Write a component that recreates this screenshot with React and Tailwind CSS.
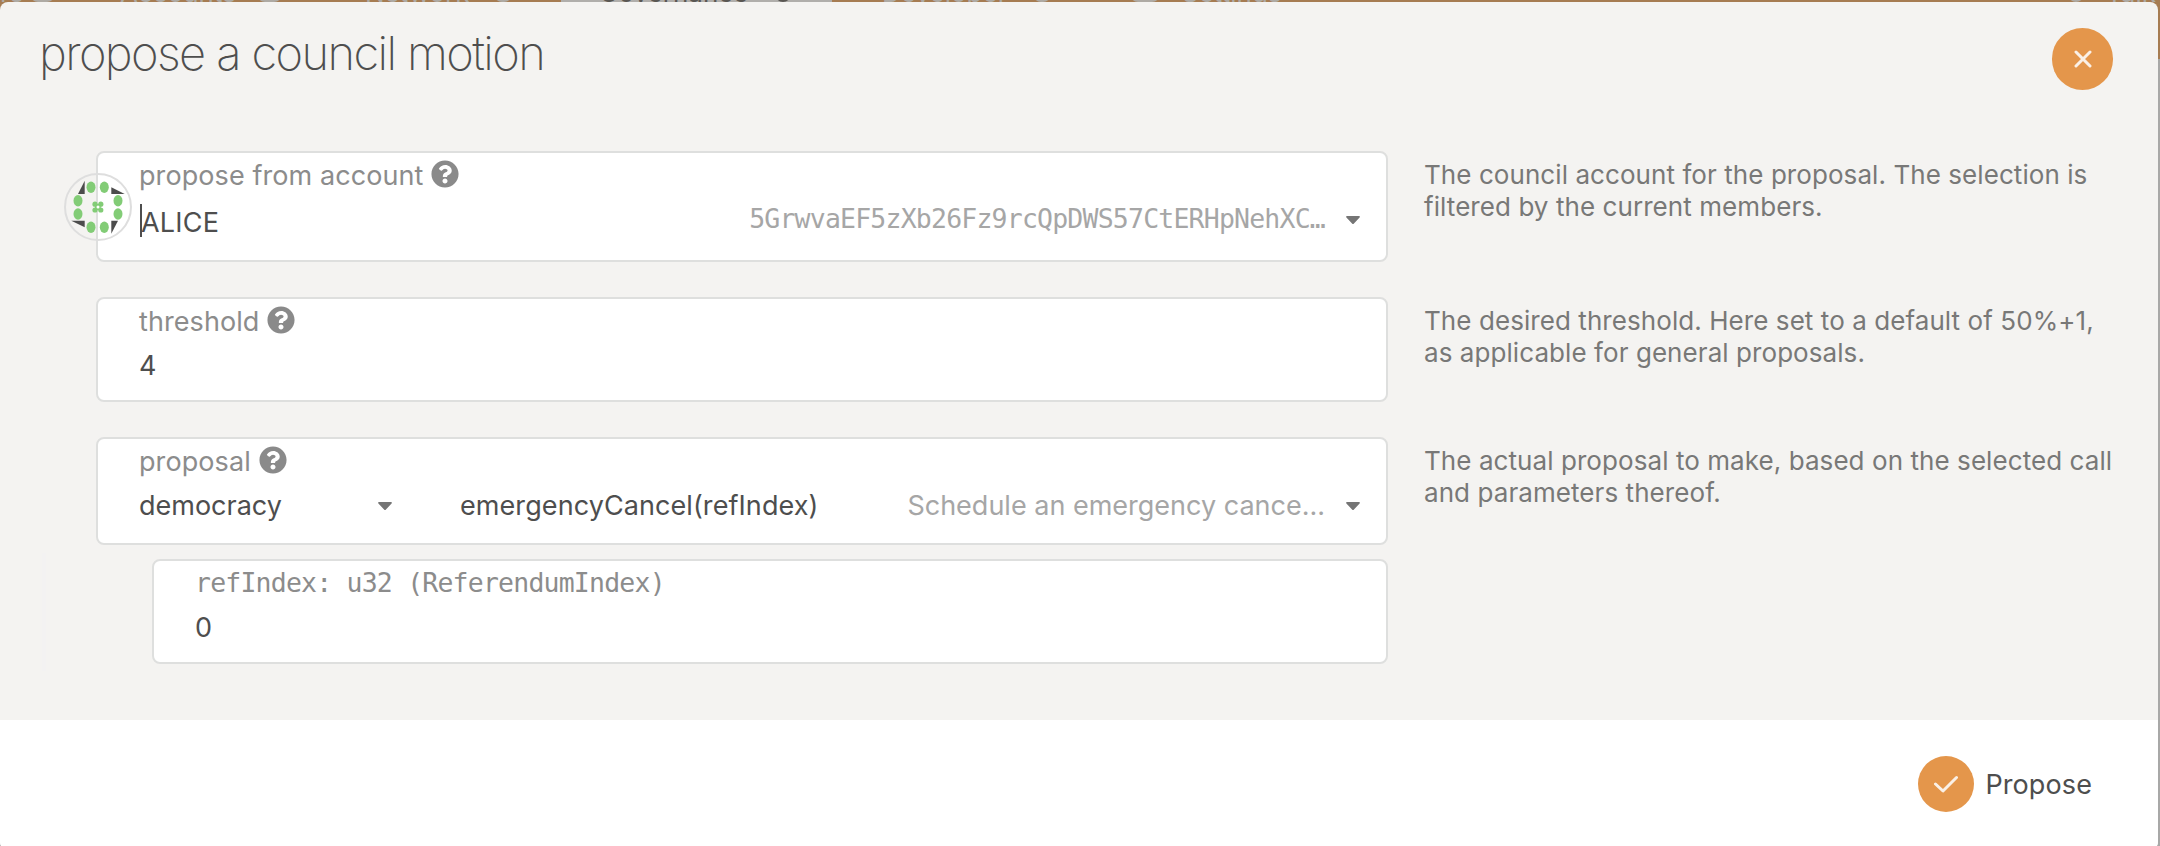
import { FaQuestionCircle } from "react-icons/fa";

const MONO = "font-['DejaVu_Sans_Mono',monospace]";

function Caret({ className }) {
  return (
    <svg viewBox="0 0 14 8" className={`h-2 w-3.5 shrink-0 ${className}`}>
      <path d="M1 0h12c.9 0 1.200 .9 .6 1.500L7.700 7.700a1 1 0 0 1-1.400 0L.4 1.500C-.2 .9 .1 0 1 0z" fill="#757575" />
    </svg>
  );
}

function Label({ children }) {
  return (
    <div className="flex h-8 items-center text-[27px] leading-8 tracking-[0.080px] text-[#8c8c8c]">
      <span className="mt-0.5">{children}</span>
      <FaQuestionCircle className="-mt-0.5 ml-2 size-7 shrink-0 text-[#8a8a8a]" />
    </div>
  );
}

function Field({ className, children }) {
  return (
    <div className={`relative rounded-lg border-2 border-[#dedfde] bg-white pt-1.5 pl-[41px] pr-[26px] ${className}`}>
      {children}
    </div>
  );
}

function Row({ hint, className, children }) {
  return (
    <div className={`flex ${className}`}>
      <div className="w-[1292px] shrink-0">{children}</div>
      <p className="ml-9 w-[700px] pt-2 text-[26px] leading-8 tracking-[0.070px] text-[#787877]">{hint}</p>
    </div>
  );
}

function Identicon() {
  const dots = [
    [27, 14.3], [40.3, 14.3], [14, 27.7], [54, 27.7],
    [14, 41], [54, 41], [27, 54.3], [40.3, 54.3],
  ];
  const small = [[31, 31.2], [36.8, 31.2], [31, 37], [36.8, 37]];
  return (
    <svg viewBox="0 0 68 68" className="absolute top-[20px] left-[-34px] size-[68px]">
      <circle cx="34" cy="34" r="33" fill="none" stroke="#dedede" strokeWidth="2" />
      <g fill="#4c4c4c">
        <path d="M14 21h6.700V7.700z" />
        <path d="M47.300 14.300V21h13.400z" />
        <path d="M7.300 47.700h13.400v6.600z" />
        <path d="M47.300 47.700H54l-6.700 13z" />
      </g>
      <g fill="#82cc76">
        {dots.map(([x, y]) => (
          <ellipse key={`${x}-${y}`} cx={x} cy={y} rx="4.500" ry="5.700" />
        ))}
        {small.map(([x, y]) => (
          <circle key={`${x}-${y}`} cx={x} cy={y} r="2.600" />
        ))}
        <path d="M31 31h5.800v6H31z" />
      </g>
      <circle cx="34" cy="34.100" r="1.500" fill="#fff" />
    </svg>
  );
}

function Dot({ className }) {
  return <span className={`-mt-3.5 h-4 shrink-0 rounded-full bg-current ${className}`} />;
}

export default function App() {
  return (
    <div className="h-[846px] w-[2160px] overflow-hidden bg-[#a8a8a7] font-['Inter',sans-serif]">
      <nav className="flex h-[59px] items-start overflow-hidden bg-[#a67c52] text-[26px] leading-none whitespace-nowrap text-[#aeaaa4]">
        <span className="-mt-5 w-[30px] shrink-0">rs</span>
        <Dot className="w-[25px]" />
        <span className="-mt-5 ml-[65px] w-[137px] shrink-0">Accounts</span>
        <Dot className="w-[25px]" />
        <span className="-mt-5 ml-[83px] w-[129px] shrink-0">Network</span>
        <Dot className="w-[18px]" />
        <span className="ml-[49px] flex h-full w-[271px] shrink-0 bg-[#b0aeab] text-[#5a5753]">
          <span className="-mt-5 ml-[38px] w-[176px]">Governance</span>
          <Dot className="w-4" />
        </span>
        <span className="-mt-5 ml-[50px] w-[151px] shrink-0">Developer</span>
        <Dot className="w-[18px]" />
        <Dot className="ml-[79px] w-[30px]" />
        <span className="-mt-5 ml-[22px] shrink-0">Settings</span>
        <Dot className="ml-auto w-4" />
        <span className="-mt-5 mr-1 ml-[22px] shrink-0">Talk</span>
      </nav>

      <section className="relative -mt-[57px] flex h-[848px] w-[2158px] flex-col overflow-hidden rounded-lg bg-[#f4f3f1]">
        <header className="flex h-[149px] shrink-0 items-start justify-between pr-[45px] pl-[39px]">
          <h1 className="mt-[21px] text-[47px] leading-[60px] font-extralight tracking-[-1.600px] text-[#4e4e4e]">
            propose a council motion
          </h1>
          <button className="mt-[26px] flex h-[62px] w-[61px] items-center justify-center rounded-full bg-[#e4964b]">
            <svg viewBox="0 0 18 18" className="size-[18px]">
              <path d="M2 2l14 14M16 2L2 16" stroke="#faf0e6" strokeWidth="3" strokeLinecap="round" />
            </svg>
          </button>
        </header>

        <div className="h-[569px] shrink-0 pl-24">
          <Row
            className="h-[146px]"
            hint="The council account for the proposal. The selection is filtered by the current members."
          >
            <Field className="h-[111px]">
              <Label>propose from account</Label>
              <div className="mt-[15px] flex h-8 items-center text-[27px] leading-8 text-[#4e4e4e]">
                <span className="-mt-1 -mr-px ml-[1px] h-[33px] w-0.5 shrink-0 bg-[#4e4e4e]" />
                <span className="mt-0.5 tracking-[0.200px]">ALICE</span>
                <span className={`-mt-1.5 ml-auto text-[26.500px] leading-8 tracking-[-0.800px] text-[#a6a6a6] ${MONO}`}>
                  5GrwvaEF5zXb26Fz9rcQpDWS57CtERHpNehXC…
                </span>
                <Caret className="-mt-1 ml-[21px]" />
              </div>
              <Identicon />
            </Field>
          </Row>

          <Row
            className="h-[140px]"
            hint="The desired threshold. Here set to a default of 50%+1, as applicable for general proposals."
          >
            <Field className="h-[105px]">
              <Label>threshold</Label>
              <div className="mt-[13px] text-[27px] leading-8 text-[#4e4e4e]">4</div>
            </Field>
          </Row>

          <Row
            className="h-[122px]"
            hint="The actual proposal to make, based on the selected call and parameters thereof."
          >
            <Field className="h-[108px]">
              <Label>proposal</Label>
              <div className="mt-[13px] flex h-8 items-center text-[27px] leading-8 text-[#4e4e4e]">
                <span className="w-[239px] shrink-0">democracy</span>
                <Caret />
                <span className="ml-[68px] tracking-[0.080px]">emergencyCancel(refIndex)</span>
                <span className="ml-auto text-[#a6a6a6]">Schedule an emergency cance...</span>
                <Caret className="ml-[21px]" />
              </div>
            </Field>
          </Row>

          <div className="-ml-[54px] flex h-[105px]">
            <div className="-mt-1.5 mr-[106px] h-[118px] w-1 bg-[#f3f2f2]" />
            <Field className="w-[1236px]">
              <div className={`h-8 text-[26.500px] leading-8 tracking-[-0.800px] text-[#8c8c8c] ${MONO}`}>
                refIndex: u32 (ReferendumIndex)
              </div>
              <div className="mt-[13px] text-[27px] leading-8 text-[#4e4e4e]">0</div>
            </Field>
          </div>
        </div>

        <footer className="flex flex-1 items-start justify-end bg-white pt-9 pr-[66px]">
          <button className="flex items-center text-[27px] leading-8 tracking-[0.100px] text-[#4e4e4e]">
            <span className="mr-[11px] flex size-14 items-center justify-center rounded-full bg-[#e4964b]">
              <svg viewBox="0 0 24 18" className="h-[18px] w-6" fill="none">
                <path d="M1.500 9L9 16L22.500 2.500" stroke="#faf0e6" strokeWidth="3" strokeLinecap="round" strokeLinejoin="round" />
              </svg>
            </span>
            <span className="mt-0.5">Propose</span>
          </button>
        </footer>
      </section>
    </div>
  );
}
